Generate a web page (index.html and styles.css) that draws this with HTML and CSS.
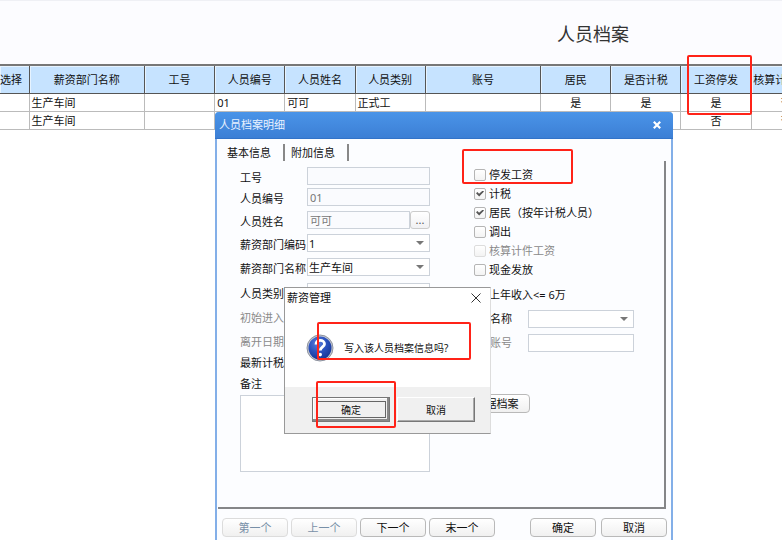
FILE: index.html
```html
<!DOCTYPE html>
<html lang="zh-CN">
<head>
<meta charset="utf-8">
<title>人员档案</title>
<link rel="stylesheet" href="styles.css">
</head>
<body>
<main class="page">
  <header class="page-head"><h1>人员档案</h1></header>
  <div class="grid-wrap">
    <table class="records">
      <colgroup>
        <col class="c-pick"><col class="c-wide"><col class="c-std"><col class="c-std"><col class="c-std"><col class="c-std"><col class="c-wide"><col class="c-std"><col class="c-std"><col class="c-std"><col class="c-std">
      </colgroup>
      <thead>
        <tr><th class="pick">选择</th><th>薪资部门名称</th><th>工号</th><th>人员编号</th><th>人员姓名</th><th>人员类别</th><th>账号</th><th>居民</th><th>是否计税</th><th>工资停发</th><th>核算计件工资</th></tr>
      </thead>
      <tbody>
        <tr><td></td><td>生产车间</td><td></td><td>01</td><td>可可</td><td>正式工</td><td></td><td class="mid">是</td><td class="mid">是</td><td class="mid">是</td><td class="mid">否</td></tr>
        <tr><td></td><td>生产车间</td><td></td><td></td><td></td><td></td><td></td><td></td><td></td><td class="mid">否</td><td class="mid">否</td></tr>
      </tbody>
    </table>
  </div>

  <section class="modal">
    <header class="modal-head">
      <h2>人员档案明细</h2>
      <button class="modal-close" type="button" aria-label="关闭">
        <svg width="8" height="8" viewBox="0 0 8 8"><path d="M0.8 0.8L7.2 7.2M7.2 0.8L0.8 7.2" stroke="#fff" stroke-width="2.2"/></svg>
      </button>
    </header>
    <nav class="tabs">
      <button type="button" class="tab">基本信息</button>
      <button type="button" class="tab">附加信息</button>
    </nav>
    <form class="panel">
      <div class="left">
        <div class="fields">
          <label for="no">工号</label><input id="no" type="text" disabled>
          <label for="code">人员编号</label><input id="code" type="text" value="01" disabled>
          <label for="name">人员姓名</label>
          <div class="lookup"><input id="name" type="text" value="可可" disabled><button type="button">...</button></div>
          <label for="dcode">薪资部门编码</label>
          <div class="select"><select id="dcode"><option>1</option></select></div>
          <label for="dname">薪资部门名称</label>
          <div class="select"><select id="dname"><option>生产车间</option></select></div>
          <label for="kind">人员类别</label>
          <div class="select"><select id="kind"></select></div>
          <span class="muted">初始进入日</span><span></span>
          <span class="muted">离开日期</span><span></span>
          <span>最新计税日</span><span></span>
        </div>
        <label class="note-label" for="note">备注</label>
        <textarea id="note"></textarea>
      </div>
      <div class="right">
        <label class="check"><input type="checkbox">停发工资</label>
        <label class="check"><input type="checkbox" checked>计税</label>
        <label class="check"><input type="checkbox" checked>居民（按年计税人员）</label>
        <label class="check"><input type="checkbox">调出</label>
        <label class="check muted"><input type="checkbox" disabled>核算计件工资</label>
        <label class="check"><input type="checkbox">现金发放</label>
        <label class="check income"><input type="checkbox">上年收入&lt;= 6万</label>
        <div class="bank">
          <label for="bank">名称</label>
          <div class="select"><select id="bank"></select></div>
          <label class="muted" for="acct">账号</label><input id="acct" type="text">
        </div>
        <button type="button" class="btn file-btn">据档案</button>
      </div>
    </form>
    <footer class="modal-foot">
      <button type="button" class="btn" disabled>第一个</button>
      <button type="button" class="btn" disabled>上一个</button>
      <button type="button" class="btn">下一个</button>
      <button type="button" class="btn">末一个</button>
      <button type="button" class="btn push">确定</button>
      <button type="button" class="btn last">取消</button>
    </footer>
  </section>

  <section class="prompt">
    <header class="prompt-head">
      <h3>薪资管理</h3>
      <button type="button" aria-label="关闭">
        <svg width="10" height="10" viewBox="0 0 10 10"><path d="M0.5 0.5L9.5 9.5M9.5 0.5L0.5 9.5" stroke="#333" stroke-width="1"/></svg>
      </button>
    </header>
    <div class="prompt-body">
      <svg width="28" height="28" viewBox="0 0 28 28">
        <defs><radialGradient id="ball" cx="0.4" cy="0.3" r="0.8"><stop offset="0" stop-color="#5b80dc"/><stop offset="0.5" stop-color="#2950bc"/><stop offset="1" stop-color="#12308c"/></radialGradient></defs>
        <circle cx="14" cy="14" r="13" fill="#c4c8d2" stroke="#8e939f" stroke-width="1"/>
        <circle cx="14" cy="14" r="11.5" fill="url(#ball)"/>
        <path d="M10 10.5C10 4.8 18.5 5.2 18.5 10C18.5 13 14.3 13 14.3 16.6" fill="none" stroke="#fff" stroke-width="2.8"/>
        <circle cx="14.2" cy="20.6" r="1.8" fill="#fff"/>
      </svg>
      <p>写入该人员档案信息吗?</p>
    </div>
    <footer class="prompt-foot">
      <button type="button" class="classic default">确定</button>
      <button type="button" class="classic">取消</button>
    </footer>
  </section>

  <div class="mark mark-column"></div>
  <div class="mark mark-stop"></div>
  <div class="mark mark-message"></div>
  <div class="mark mark-ok"></div>
</main>
</body>
</html>
```
FILE: styles.css
```css
* { box-sizing: border-box; }
html, body { height: 100%; margin: 0; overflow: hidden; }
body, button, input, select, textarea {
  font-family: "Noto Sans", "Noto Sans CJK SC", sans-serif;
  font-size: 11px;
  color: #111;
}
body { background: #fff; line-height: 16px; }
h1, h2, h3, p { margin: 0; font-weight: 400; }
button { padding: 0; }

.page { position: relative; min-height: 100%; overflow: hidden; }
.page-head {
  height: 64px;
  padding: 21px 0 0 557px;
  background: #fcfcff;
  border-top: 1px solid #eff0f5;
}
.page-head h1 { font-size: 18px; line-height: 24px; color: #333; white-space: nowrap; }

.grid-wrap { overflow: hidden; }
.records { width: 822px; table-layout: fixed; border-collapse: collapse; }
.c-pick { width: 29px; }
.c-wide { width: 115px; }
.c-std { width: 70px; }
.records th {
  height: 28px;
  padding: 2px 0 0;
  background: #c6e3ff;
  border: 1px solid #555;
  border-top: 2px solid #777;
  box-shadow: inset 1px 1px #e6f3ff;
  font-weight: 400;
  white-space: nowrap;
}
.records .pick { text-align: left; }
.records td {
  height: 18px;
  padding: 1px 2px 0;
  line-height: 15px;
  border: 1px solid #bbb;
}
.records tbody tr:first-child td { border-top-color: #555; }
.records .mid { text-align: center; }
.records th:first-child, .records td:first-child { border-left: 0; }

.modal {
  position: absolute;
  left: 215px;
  top: 112px;
  width: 458px;
  background: #fcfdff;
  border: solid #83afe8;
  border-width: 0 2px;
  border-radius: 4px 4px 0 0;
}
.modal-head {
  display: flex;
  align-items: center;
  justify-content: space-between;
  height: 27px;
  margin: 0 -2px;
  padding: 0 12px 0 4px;
  background: linear-gradient(#4a94e8, #3c7fd5);
  border-bottom: 1px solid #3273c8;
  border-radius: 4px 4px 0 0;
}
.modal-head h2 { font-size: 11px; color: #e8f2ff; }
.modal-close { display: flex; background: none; border: 0; }

.tabs { display: flex; height: 22px; padding: 5px 0 0 4px; }
.tab {
  height: 17px;
  padding: 0 12px 0 6px;
  line-height: 15px;
  background: none;
  border: 0;
  border-right: 2px solid #888;
}

.panel {
  display: grid;
  grid-template-columns: 190px 1fr;
  gap: 44px;
  height: 348px;
  margin: 0 5px 0 1px;
  padding: 4px 0 0 22px;
  border: solid #858688;
  border-width: 0 2px 2px 0;
}
.fields {
  display: grid;
  grid-template-columns: 67px 1fr;
  grid-template-rows: 21px 23px 23px 24px 25px 24px 24px 21px 21px;
  align-items: start;
  padding-top: 2px;
  line-height: 22px;
  white-space: nowrap;
}
.muted { color: #8a8a8a; }
input[type="text"], select, textarea {
  display: block;
  width: 100%;
  height: 18px;
  margin: 0;
  padding: 0 1px;
  background: #fff;
  border: 1px solid #ccd2da;
  border-radius: 0;
  outline: 0;
}
input[type="text"] { padding: 0 2px; }
input[type="text"]:disabled { background: #fafbfe; color: #777; }
select { appearance: none; }
.select { position: relative; }
.select::after {
  content: "";
  position: absolute;
  right: 6px;
  top: 7px;
  border: solid transparent;
  border-width: 4px 4px 0;
  border-top-color: #777;
}
.lookup { display: flex; }
.lookup button {
  flex: 0 0 20px;
  height: 18px;
  line-height: 10px;
  background: linear-gradient(#fff, #f1f1f3);
  border: 1px solid #ccc;
  border-radius: 3px;
  color: #555;
}
.note-label { display: block; line-height: 22px; }
.left textarea { height: 77px; resize: none; }

.right { white-space: nowrap; }
.check { display: flex; align-items: center; gap: 3px; height: 19px; }
.check input {
  display: grid;
  place-content: center;
  appearance: none;
  width: 12px;
  height: 12px;
  margin: 0;
  background: linear-gradient(#fff, #f3f3f3);
  border: 1px solid #b5b5b5;
  border-radius: 2px;
}
.check input:disabled { border-color: #ddd; }
.check input:checked::before {
  content: "";
  width: 8px;
  height: 6px;
  background: #555;
  clip-path: polygon(0 45%, 18% 25%, 38% 55%, 85% 0, 100% 18%, 40% 100%);
}
.income { margin: 6px 0; }
.bank {
  display: grid;
  grid-template-columns: 54px 106px;
  row-gap: 6px;
  line-height: 18px;
}
.bank label { padding-left: 16px; }

.btn {
  width: 66px;
  height: 19px;
  line-height: 16px;
  background: linear-gradient(#fff, #f0f0f0);
  border: 1px solid #b9b9b9;
  border-radius: 4px;
}
.btn:disabled { color: #7890a8; border-color: #dcdcdc; }
.file-btn { width: 56px; margin-top: 42px; }
.modal-foot { display: flex; gap: 3px; padding: 9px 4px 8px 5px; }
.push { margin-left: auto; }
.last { margin-left: 2px; }

.prompt {
  position: absolute;
  left: 284px;
  top: 287px;
  width: 207px;
  background: #fff;
  border: 1px solid #999;
  border-right-color: #ddd;
}
.prompt-head {
  display: flex;
  align-items: center;
  justify-content: space-between;
  height: 20px;
  padding: 0 9px 0 2px;
}
.prompt-head h3 { font-size: 11px; }
.prompt-head button { display: flex; background: none; border: 0; }
.prompt-body {
  display: flex;
  align-items: center;
  gap: 10px;
  height: 79px;
  padding-left: 21px;
}
.prompt-body p { font-size: 10px; white-space: nowrap; }
.prompt-foot {
  display: flex;
  gap: 7px;
  height: 46px;
  padding: 10px 0 0 27px;
  background: #f0f0f0;
}
.classic {
  width: 78px;
  height: 25px;
  font-size: 10px;
  line-height: 20px;
  background: #f0f0f0;
  border: 1px solid;
  border-color: #fff #777 #777 #fff;
  box-shadow: inset -1px -1px #aaa;
}
.default {
  border-color: #777;
  box-shadow: inset -2px -2px #888, inset 1px 1px #fff;
  outline: 1px solid #666;
  outline-offset: -5px;
}

.mark { position: absolute; border: 2px solid #ff2318; border-radius: 2px; pointer-events: none; }
.mark-column { left: 687px; top: 55px; width: 65px; height: 60px; }
.mark-stop { left: 462px; top: 149px; width: 111px; height: 35px; }
.mark-message { left: 317px; top: 322px; width: 154px; height: 38px; }
.mark-ok { left: 316px; top: 381px; width: 80px; height: 47px; }
```
